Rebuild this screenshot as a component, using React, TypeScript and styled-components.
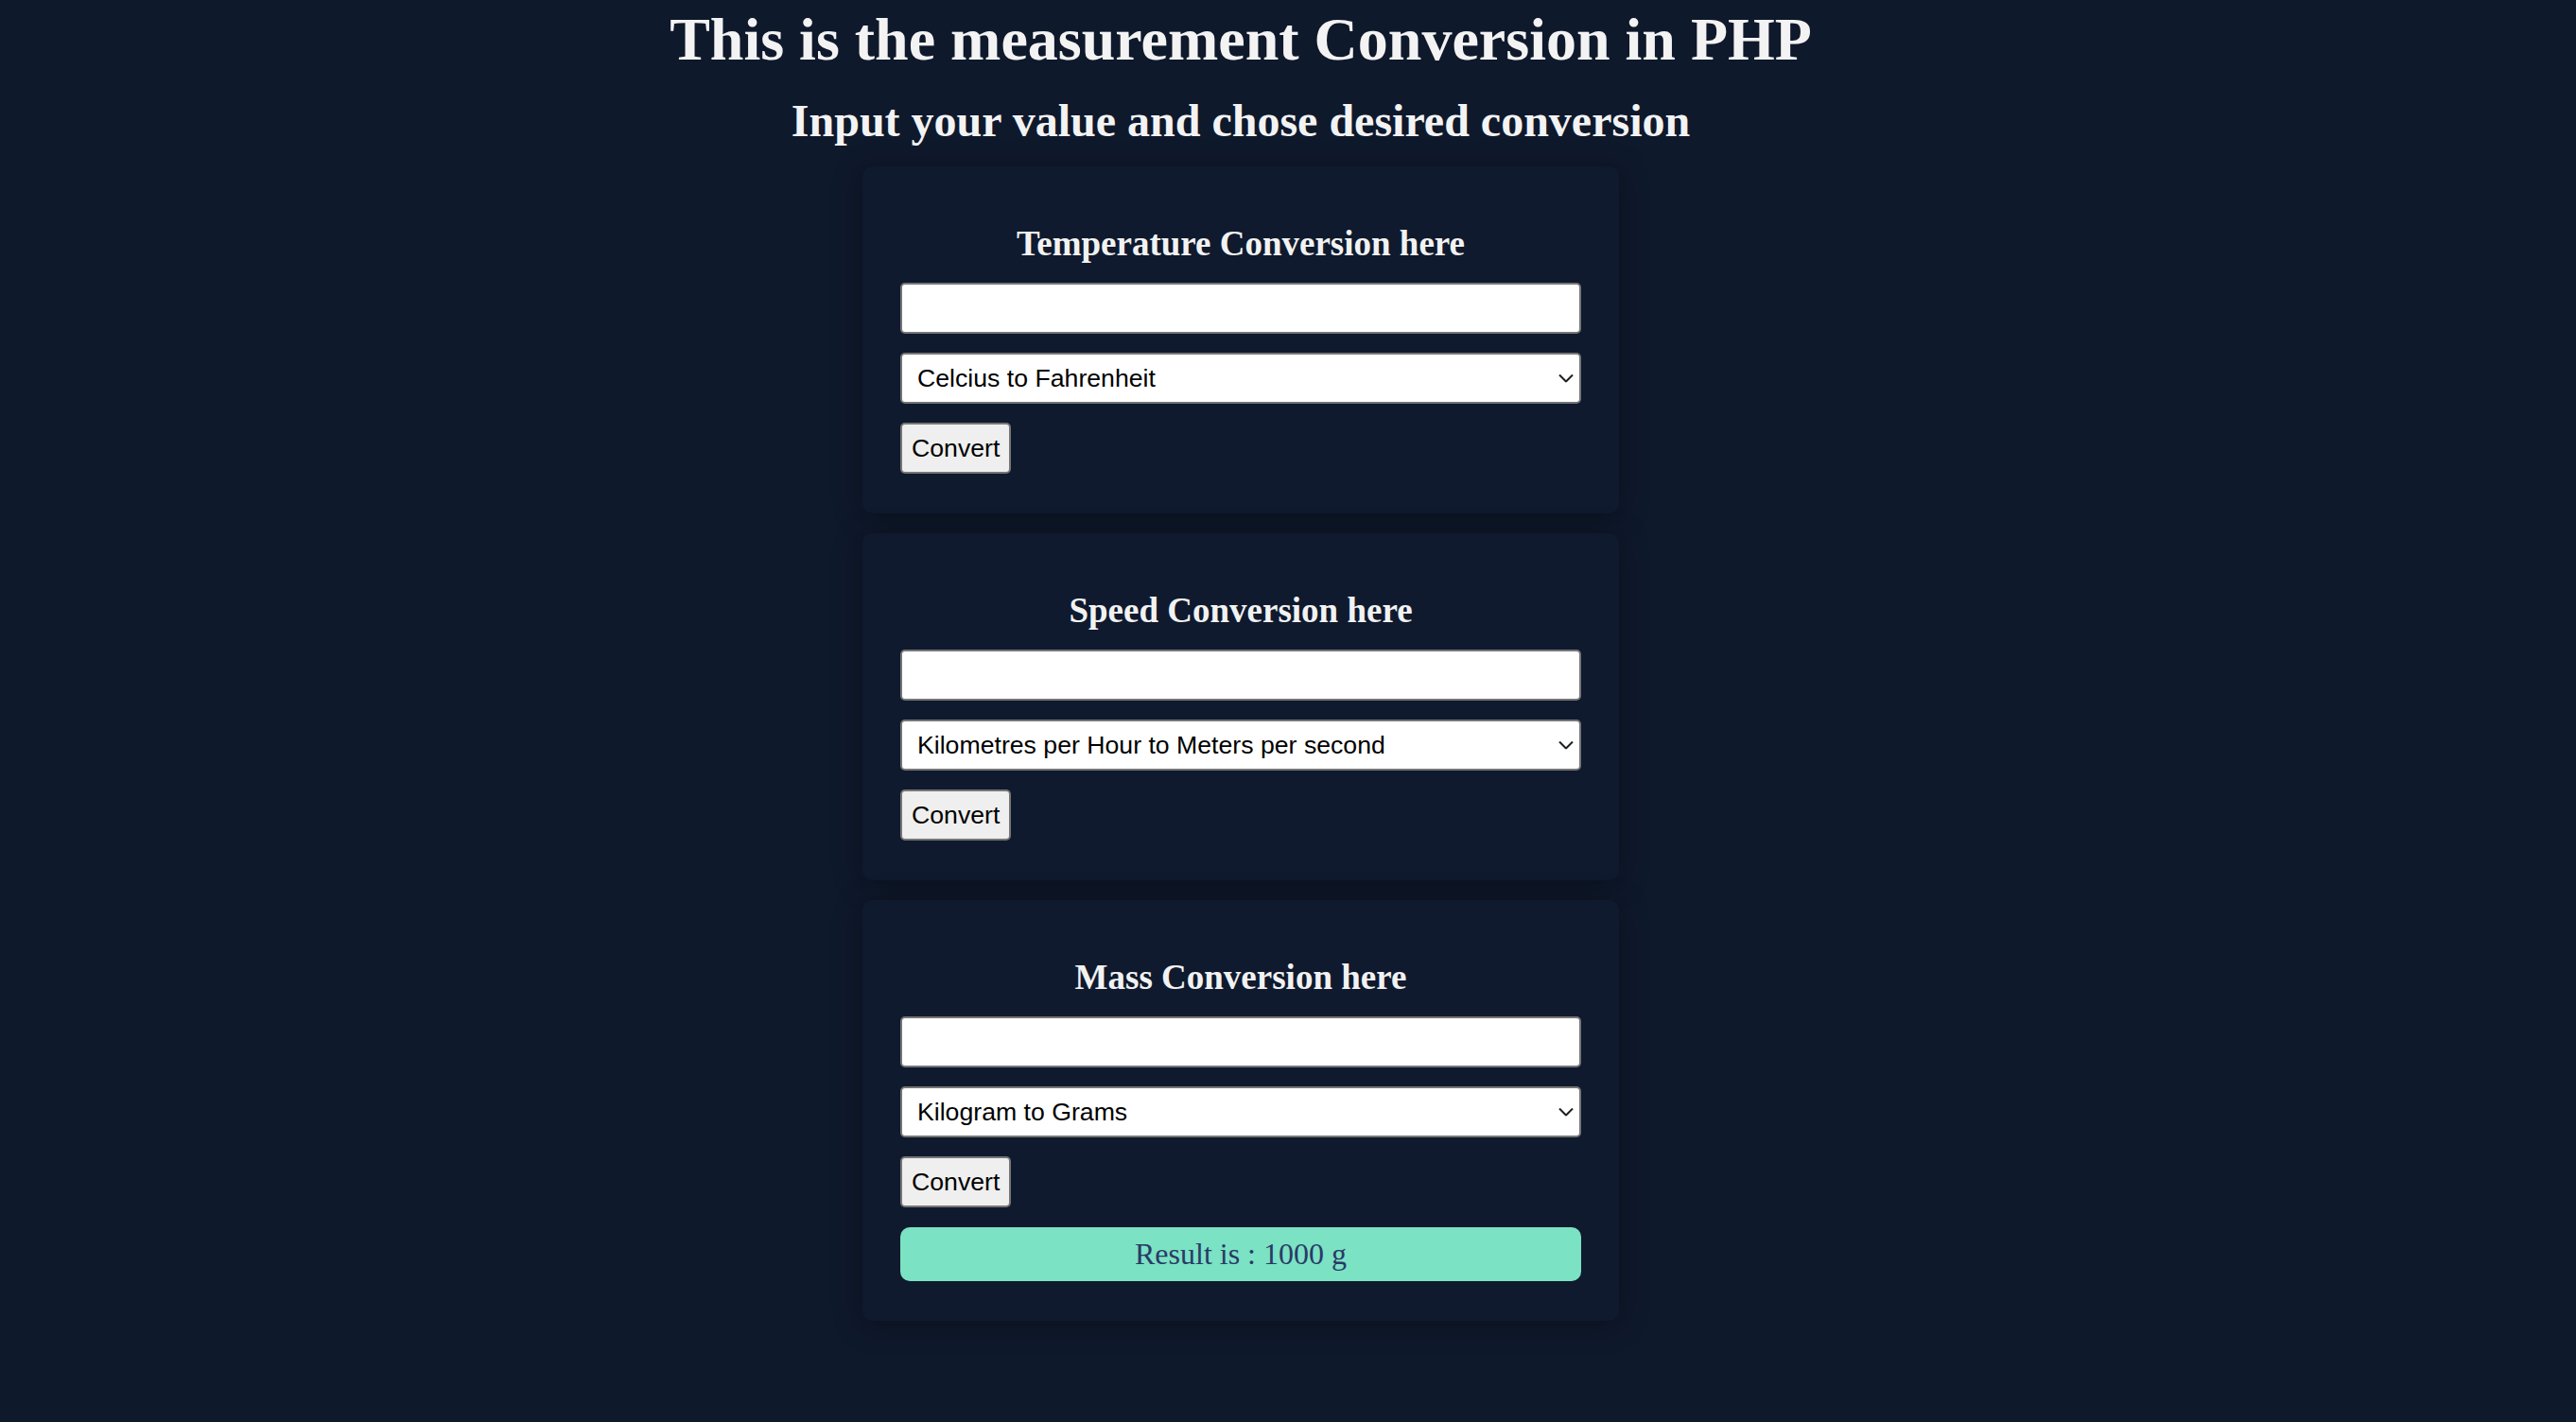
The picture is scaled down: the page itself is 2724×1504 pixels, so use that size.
import React from 'react';
import styled, {createGlobalStyle} from 'styled-components';

interface Converter {
  title: string;
  option: string;
  result?: string;
}

const converters: Converter[] = [
  {title: 'Temperature Conversion here', option: 'Celcius to Fahrenheit'},
  {title: 'Speed Conversion here', option: 'Kilometres per Hour to Meters per second'},
  {title: 'Mass Conversion here', option: 'Kilogram to Grams', result: 'Result is : 1000 g'},
];

const ConverterCard = ({title, option, result}: Converter) => (
  <Card>
    <CardTitle>{title}</CardTitle>
    <Form onSubmit={(e) => e.preventDefault()}>
      <TextInput type="text" />
      <SelectWrap>
        <Select defaultValue={option}>
          <option>{option}</option>
        </Select>
        <Chevron width="16" height="9" viewBox="0 0 16 9">
          <path d="M1 1 L8 8 L15 1" fill="none" stroke="#1f1f1f" strokeWidth="2" />
        </Chevron>
      </SelectWrap>
      <Button type="submit">Convert</Button>
      {result && <Result>{result}</Result>}
    </Form>
  </Card>
);

const App = () => (
  <>
    <GlobalStyle />
    <Page>
      <Title>This is the measurement Conversion in PHP</Title>
      <Subtitle>Input your value and chose desired conversion</Subtitle>
      <Cards>
        {converters.map((c) => (
          <ConverterCard key={c.title} {...c} />
        ))}
      </Cards>
    </Page>
  </>
);

export default App;

const GlobalStyle = createGlobalStyle`
  html, body {
    margin: 0;
    background-color: #0f192c;
  }
  body {
    min-height: 1504px;
    font-family: "Liberation Serif", "Times New Roman", serif;
    color: #f3f3f3;
  }
`;

const Page = styled.div`
  width: 2624px;
  padding-top: 5px;
  display: flex;
  flex-direction: column;
  align-items: center;
`;

const Title = styled.h1`
  margin: 0 0 21px;
  font-size: 64px;
  line-height: 74px;
  font-weight: 700;
  text-align: center;
`;

const Subtitle = styled.h2`
  margin: 0 0 21px;
  font-size: 48px;
  line-height: 55px;
  font-weight: 700;
  text-align: center;
`;

const Cards = styled.div`
  display: flex;
  flex-direction: column;
  gap: 21px;
`;

const Card = styled.div`
  width: 800px;
  box-sizing: border-box;
  padding: 60px 40px 42px;
  border-radius: 10px;
  background-color: #0f1a2e;
  box-shadow: 0 4px 30px rgba(0, 0, 0, 0.35);
`;

const CardTitle = styled.h3`
  margin: 0 0 20px;
  font-size: 37px;
  line-height: 43px;
  font-weight: 700;
  text-align: center;
  color: #f2f2f2;
`;

const Form = styled.form`
  display: flex;
  flex-direction: column;
  align-items: flex-start;
  gap: 20px;
`;

const TextInput = styled.input`
  width: 100%;
  height: 54px;
  box-sizing: border-box;
  border: 2px solid #767676;
  border-radius: 5px;
  background: #fff;
  outline: none;
`;

const SelectWrap = styled.div`
  position: relative;
  width: 100%;
`;

const Select = styled.select`
  appearance: none;
  width: 100%;
  height: 54px;
  box-sizing: border-box;
  padding: 0 40px 0 16px;
  border: 2px solid #767676;
  border-radius: 5px;
  background: #fff;
  font-family: "Liberation Sans", Arial, sans-serif;
  font-size: 26.67px;
  color: #000;
  outline: none;
`;

const Chevron = styled.svg`
  position: absolute;
  right: 8px;
  top: 50%;
  transform: translateY(-50%);
  pointer-events: none;
`;

const Button = styled.button`
  height: 54px;
  padding: 0 10px;
  border: 2px solid #767676;
  border-radius: 5px;
  background: #efefef;
  font-family: "Liberation Sans", Arial, sans-serif;
  font-size: 26.67px;
  color: #000;
  cursor: pointer;
`;

const Result = styled.div`
  width: 100%;
  height: 57px;
  margin-top: 1px;
  display: flex;
  align-items: center;
  justify-content: center;
  border-radius: 10px;
  background-color: #7be2c4;
  font-size: 32px;
  color: #2a3a66;
`;
